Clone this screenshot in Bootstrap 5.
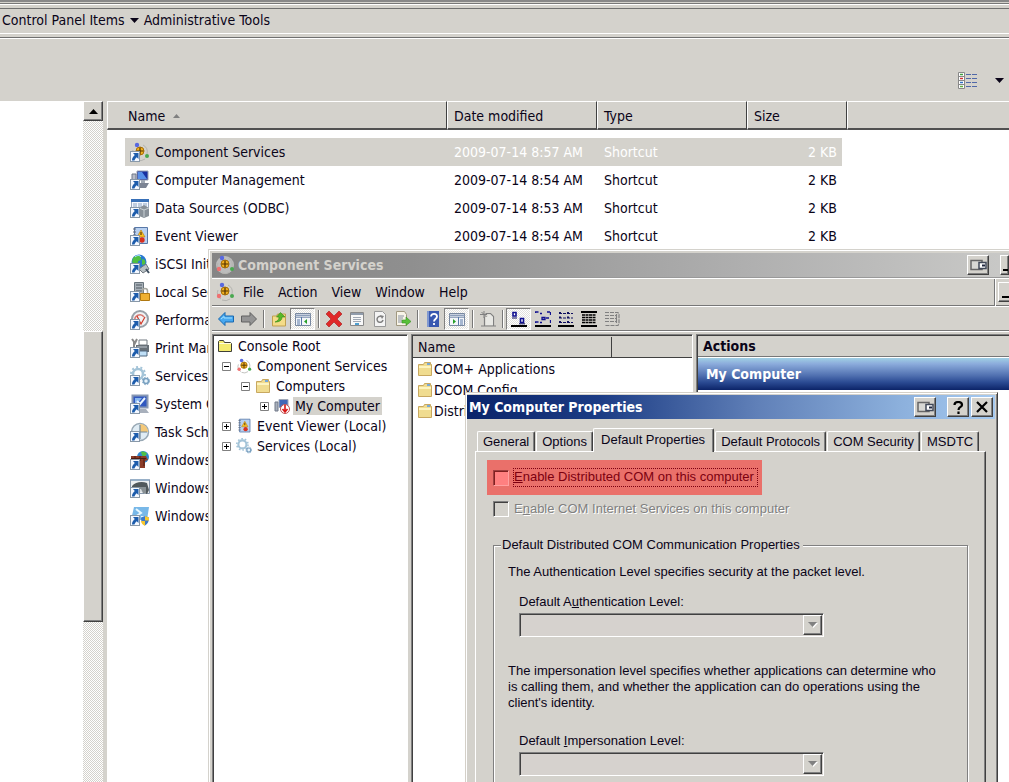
<!DOCTYPE html>
<html lang="en">
<head>
<meta charset="utf-8">
<meta name="viewport" content="width=device-width, initial-scale=1">
<title>Administrative Tools</title>
<link rel="stylesheet" href="https://cdn.jsdelivr.net/npm/bootstrap@5.3.0/dist/css/bootstrap.min.css">
<script src="https://cdn.jsdelivr.net/npm/bootstrap@5.3.0/dist/js/bootstrap.bundle.min.js"></script>
<style>
:root{--face:#d4d2cc;--shade:#808080;--edge:#404040}
body{font-family:"DejaVu Sans Condensed","DejaVu Sans",sans-serif;font-size:14px;line-height:20px;color:#0a0418;background:#fff;overflow:hidden}
button{font:inherit;color:inherit;padding:0;border:0;background:none}
svg{display:block;flex:none}
a{color:inherit;text-decoration:none}
.face{background:var(--face)}
.explorer{min-height:100vh}
.strip-top{height:9px;background:linear-gradient(#888 0 2px,var(--face) 2px 3px,#777 3px 4px,#fff 4px 5px,var(--face) 5px 8px,#707070 8px)}
.crumbs{height:25px;border-bottom:1px solid #fff;padding:0 0 2px 2px;gap:5px}
.crumb-rule{height:5px;background:linear-gradient(var(--face) 0 3px,#707070 3px 4px,#fff 4px)}
.command-bar{height:62px;padding:20px 5px 0 0;gap:17px}
.nav-pane{width:83px}
.scroll-track{width:20px;background:repeating-conic-gradient(#fff 0 25%,var(--face) 0 50%) 0 0/2px 2px}
.raised{background:var(--face);border:1px solid;border-color:#fff #404040 #404040 #fff;box-shadow:inset -1px -1px #808080}
.scroll-up{height:20px}
.scroll-thumb{height:291px;margin-top:210px}
.splitter{width:4px}
.files{table-layout:fixed;width:100%;border-collapse:separate;border-spacing:0}
.files th{height:29px;padding:2px 0 0 6px;font-weight:400;background:var(--face);border-top:1px solid #fff;border-right:1px solid var(--edge);border-left:1px solid #fff;border-bottom:2px solid #505050}
.files th:first-child{padding-left:20px}
.files th:last-child{border-right:0}
.files tbody::before{content:"";display:block;height:8px}
.files td{padding:0;white-space:nowrap}
.cell{height:28px;padding-left:7px;display:flex;align-items:center}
.cell-name{margin-left:18px;padding-left:5px;gap:5px}
.cell-size{margin-right:5px;padding-right:5px;justify-content:flex-end}
.picked .cell{background:var(--face);color:#fff}
.picked .cell-name a{color:#0a0418}
.win{background:var(--face);position:absolute;bottom:0;overflow:hidden}
.console{left:208px;top:249px;right:0;padding:4px 0 0 4px;box-shadow:inset 1px 1px var(--face),inset 2px 2px #fff}
.title{height:24px;font-weight:700;white-space:nowrap}
.console .title{color:var(--face);background:linear-gradient(90deg,#858585,#8f8f8f 25%,#b0b0b0 68%,#c9c9c7);padding:0 0 0 3px;gap:3px}
.bold{font-weight:700}
.tbtn{width:22px;height:20px;display:grid;place-items:center;font-weight:700}
.tbtn.cut{width:9px;overflow:hidden}
.menu-row{height:28px;border-top:1px solid #fff;border-bottom:1px solid #777;margin-top:1px;padding-left:3px;box-shadow:0 -1px #999}
.menu-row .item{margin-right:14px}
.mdi{height:27px;border-left:1px solid #777;width:15px;box-shadow:inset 1px 0 #fff;padding:3px 0 0 3px}
.tools{height:25px;border-top:1px solid #fff;border-bottom:1px solid #777;padding-left:2px;box-shadow:0 1px #fff}
.tool{width:23px;height:22px;display:grid;place-items:center}
.tool.on{width:25px;border:1px solid;border-color:#808080 #fff #fff #808080;background:repeating-conic-gradient(#fff 0 25%,#e2e1dd 0 50%) 0 0/2px 2px}
.sep{width:1px;height:18px;margin:0 3px;background:#777;box-shadow:1px 0 #fff}
.panes{margin:3px -3px -3px 0;gap:3px}
.sunken{border:1px solid;border-color:#808080 #fff #fff #808080;box-shadow:inset 1px 1px #404040;background:#fff;padding:1px 0 0 1px}
.tree-pane{width:196px}
.tree-row{height:20px;gap:5px;padding-left:3px}
.lv1{padding-left:8px}.lv2{padding-left:27px}.lv3{padding-left:46px}
.tree-pane .sel{background:var(--face);padding:0 2px;margin-left:-2px;line-height:18px}
.list-pane{width:282px}
.list-head{height:22px;background:var(--face);border-bottom:1px solid #404040}
.list-head .first-col{width:199px;padding-left:5px;border-right:1px solid #404040}
.list-row{height:21px;gap:1px;padding-left:4px}
.act-head{height:21px;padding-left:5px;border-bottom:1px solid #777}
.act-sel{height:32px;margin-top:1px;padding-left:8px;color:#fff;background:linear-gradient(#a0d0e4,#8cacdc 18%,#5070b0 55%,#2c4c94 75%,#0c2468)}
.dialog{left:465px;top:392px;right:11px;border:1px solid;border-color:#d4d0c8 #404040 #404040 #d4d0c8;border-bottom:0;box-shadow:inset 1px 1px #fff,inset -1px 0 #808080;padding:2px 2px 0 1px;font-family:"Liberation Sans",Arial,sans-serif;font-size:13px;line-height:16px}
.dialog .title{font-family:"DejaVu Sans Condensed","DejaVu Sans",sans-serif;color:#fff;background:linear-gradient(90deg,#0a246a,#1c3c84 25%,#6080b8 55%,#8cb0dc 82%,#a6caf0);padding:0 2px;font-size:14px;gap:2px}
.dock-btn{margin-right:9px}
.tabs{padding:9px 0 0 10px;height:32px;align-items:flex-end}
.tab{height:20px;border:1px solid;border-color:#fff #404040 transparent #fff;border-bottom:0;border-radius:2px 2px 0 0;box-shadow:inset -1px 0 #808080;white-space:nowrap;padding:1px 5px 0;margin-right:1px}
.tab.current{height:24px;margin-bottom:-1px;background:var(--face);padding:1px 8px 3px 7px;margin-left:-1px;z-index:1}
.sheet{margin:0 9px 0 8px;border:1px solid;border-color:#fff #404040 #404040 #fff;box-shadow:inset -1px 0 #808080;padding:8px 17px 0 11px;height:400px}
.flag{background:#ea706a;color:#7c0010;width:275px;height:35px;padding-left:6px}
.flag.off{background:none;color:#808080;text-shadow:1px 1px #fff;height:28px}
.flag label{padding:1px 1px 2px}
.flag:not(.off) label{padding-right:4px;outline:1px dotted #7c0010;outline-offset:-1px}
.tick{appearance:none;width:16px;height:16px;margin:0 4px 0 0;flex:none;border:1px solid;border-color:#808080 #fff #fff #808080;box-shadow:inset 1px 1px #404040}
.flag:not(.off) .tick{background:#ff8080;border-color:#a04040 #ffa0a0 #ffa0a0 #a04040;box-shadow:inset 1px 1px #802020}
.group{margin:14px 0 0 6px;border:1px solid #808080;box-shadow:inset 1px 1px #fff,1px 1px #fff;padding:0 14px;height:330px}
.group legend{float:none;width:auto;font-size:13px;line-height:16px;margin:-9px 0 0 -7px;padding:0 3px 0 1px;background:var(--face)}
.group p{margin:11px 0 14px}
.group .intro2{margin:26px 0 22px}
.group .field label{display:block;margin-bottom:3px}
.combo{width:305px;height:24px;position:relative}
.combo select{appearance:none;width:100%;height:100%;background:#d6d2ce;border:1px solid;border-color:#808080 #fff #fff #808080;box-shadow:inset 1px 1px #404040;border-radius:0}
.combo .raised{position:absolute;right:2px;top:2px;width:19px;height:20px;display:grid;place-items:center;pointer-events:none}
.field{padding-left:11px}
</style>
</head>
<body>
<svg width="0" height="0" class="position-absolute" aria-hidden="true">
<defs>
<symbol id="link" viewBox="0 0 20 20"><rect x=".5" y="9.500" width="9" height="10" fill="#f4f8ff" stroke="#8898a8"/><path d="M3 11h5.500v6L6.700 15.200C5.500 16 5 17 4.500 18.500H2c0-2.500 1-4 2.800-5.500z" fill="#1c5cac"/></symbol>
<symbol id="com" viewBox="0 0 20 20"><path d="M3 8a7 7 0 0 0 3 9M13 3a8 8 0 0 1 4 9M7 18a8 8 0 0 0 8-1" fill="none" stroke="#b4b4b0"/><circle cx="10" cy="9" r="4" fill="#f0b020" stroke="#a87008"/><path d="M10 5.500v7M6.500 9h7" stroke="#503000" stroke-width="1.200"/><circle cx="7" cy="3" r="2.200" fill="#5868e0"/><circle cx="17" cy="14" r="2" fill="#48a850"/><circle cx="4" cy="14" r="2.200" fill="#f07070"/></symbol>
<symbol id="comp" viewBox="0 0 20 20"><path d="M7 1h11v9H7z" fill="#1830a0" stroke="#98a0b0"/><path d="M8 2h4l5 7H8z" fill="#5890e8"/><path d="M2 4h4v7H2z" fill="#b8bcc8" stroke="#707888"/><path d="M8 13h11l-3 5H8z" fill="#7c8494"/><path d="M11 10h4v3h-4z" fill="#a0a8b4"/></symbol>
<symbol id="odbc" viewBox="0 0 20 20"><path d="M1.500 1.500h17v13h-17z" fill="#f4f8ff" stroke="#98a8c0"/><path d="M1 1h18v3H1z" fill="#3870b8"/><path d="M3 6h4M8 6h4M13 6h4M3 8h4M8 8h4M13 8h4" stroke="#88a0c0"/><path d="M9 10l5-3 5 3v8l-5 2-5-2z" fill="#889098"/><path d="M9 10l5 2 5-2M14 12v7" stroke="#c8d0d4" fill="none"/></symbol>
<symbol id="event" viewBox="0 0 20 20"><path d="M4.500 1.500h13v16h-13z" fill="#b8d0f0" stroke="#5878a8"/><path d="M3 3h3M3 6h3M3 9h3M3 12h3M3 15h3" stroke="#606878"/><path d="M11 4l4 7H7z" fill="#f8c020" stroke="#b87808" stroke-width=".600"/><path d="M11 6v3" stroke="#402000"/><circle cx="12" cy="14" r="2.700" fill="#d83020"/></symbol>
<symbol id="globe" viewBox="0 0 20 20"><circle cx="9" cy="8" r="7.500" fill="#2878d0"/><path d="M3 4c3-3 7-3 8 0s-3 2-3 4-4 2-6 0zM12 5c3 0 4 3 3 5l-3 1z" fill="#50c040"/><path d="M5 3c2-2 5-2 6 0" stroke="#c8f0ff" fill="none"/><path d="M9 15l7-5 3 5-6 4z" fill="#b8c0c4" stroke="#707880"/><path d="M16 15l3 4" stroke="#405060" stroke-width="2"/></symbol>
<symbol id="lock" viewBox="0 0 20 20"><path d="M4.500.5h9v14h-9z" fill="#a8b0b8" stroke="#68747c"/><path d="M6 3h6M6 6h6M6 9h6" stroke="#4c5860"/><path d="M12.500 12V9a2.500 2.500 0 0 1 5 0v3" fill="none" stroke="#a8a8a0" stroke-width="1.500"/><path d="M10.500 11.500h9v7h-9z" fill="#f0b030" stroke="#b07810"/></symbol>
<symbol id="gauge" viewBox="0 0 20 20"><circle cx="10" cy="9" r="8" fill="#f0f2f4" stroke="#98a0a8" stroke-width="2"/><path d="M5 11a5 5 0 0 1 9-4" fill="none" stroke="#d87870" stroke-width="1.500"/><path d="M7 6l4 8 4-7" fill="none" stroke="#d03828" stroke-width="1.200"/></symbol>
<symbol id="print" viewBox="0 0 20 20"><path d="M2 1l3 4 2-4M4 4v7" stroke="#888" fill="none" stroke-width="2"/><path d="M9 2h8v5H9z" fill="#fff" stroke="#707880"/><path d="M6 7h13v7H6z" fill="#687078"/><path d="M9 13h8v5H9z" fill="#c0e0f8" stroke="#506880"/><path d="M7 9h10" stroke="#c0c8d0"/></symbol>
<symbol id="gear" viewBox="0 0 20 20"><circle cx="8" cy="8" r="5" fill="#fff" stroke="#a4c4d8" stroke-width="2.600"/><circle cx="8" cy="8" r="7" fill="none" stroke="#a4c4d8" stroke-width="2" stroke-dasharray="2 2.400"/><circle cx="16" cy="15" r="2.500" fill="#e8f4fc" stroke="#78a0c0" stroke-width="1.500"/><circle cx="16" cy="15" r="3.700" fill="none" stroke="#78a0c0" stroke-dasharray="1.500 1.500"/></symbol>
<symbol id="sys" viewBox="0 0 20 20"><path d="M2.500 1.500h15v12h-15z" fill="#3058c0" stroke="#8898b4" stroke-width="2"/><path d="M5 4h7l-6 7H5z" fill="#88b8f0"/><path d="M7 7l3 3 5-6" stroke="#e8f4ff" stroke-width="2" fill="none"/><path d="M8 15h8l3 4H8z" fill="#a8b0bc"/></symbol>
<symbol id="clock" viewBox="0 0 20 20"><circle cx="10" cy="10" r="8.500" fill="#e0ecf4" stroke="#98a8b4" stroke-width="1.500"/><path d="M10 2a8 8 0 0 1 8 8h-8z" fill="#f4c878"/><path d="M10 3v14M10 10h7" stroke="#708898" stroke-width="1.200"/></symbol>
<symbol id="wall" viewBox="0 0 20 20"><circle cx="13" cy="7" r="6" fill="#3088d0"/><path d="M11 2c3-1 5 0 6 2l-4 4z" fill="#50c048"/><path d="M1 6h15l2 4-3 1v7h-5v-6H1z" fill="#8c3c28"/><path d="M1 8.500h15M5 6v5M10 6v5M14 8v8" stroke="#4c1c14"/></symbol>
<symbol id="mem" viewBox="0 0 20 20"><path d="M.5 1.500h19v14H.5z" fill="#eceff2" stroke="#8898ac"/><path d="M1 1h18v2H1z" fill="#98b0c8"/><path d="M2 8c3-4 10-5 15-3l2 7-2 4-4-1-2-4-9 1z" fill="#50585c"/><path d="M11 9v5M13 9v6M15 9v7" stroke="#c0c8cc"/></symbol>
<symbol id="shell" viewBox="0 0 20 20"><path d="M4 1h15l-2 13H1z" fill="#78b8e8"/><path d="M6 3l5 4-6 4M11 11h4" fill="none" stroke="#e8f8ff" stroke-width="2"/><path d="M15 10l4 1.500c0 4-1 6-4 8-3-2-4-4-4-8z" fill="#3c78c8"/><path d="M15 10l4 1.500v3h-4zM15 15h-4c0 2 2 4 4 5z" fill="#f8c830"/></symbol>
<symbol id="folder" viewBox="0 0 16 16"><path d="M1.500 14.500v-11h5l1-2h6v2h1v11z" fill="#f0dc90" stroke="#c8a860"/><path d="M2 6h12" stroke="#fdf4c0" stroke-width="2"/><path d="M10 2h3v2h-3z" fill="#78a8d8"/></symbol>
<symbol id="froot" viewBox="0 0 16 16"><path d="M1.500 13.500v-10l1-1h4l1 2h6l1 1v8z" fill="#f4ec70" stroke="#404038"/><path d="M2 5.500h12" stroke="#fffce0"/></symbol>
<symbol id="mycomp" viewBox="0 0 16 16"><path d="M1 4h3v9H1z" fill="#a8b0bc" stroke="#707888"/><path d="M5 1.500h9v8H5z" fill="#4068b8" stroke="#a0a8b8"/><circle cx="11" cy="11" r="4.500" fill="#fff" stroke="#c05050"/><path d="M11 7v6M8.500 11l2.500 3 2.500-3" stroke="#d81818" stroke-width="1.600" fill="none"/></symbol>
<symbol id="plus" viewBox="0 0 9 9"><path d="M.5.5h8v8h-8z" fill="#fff" stroke="#808080"/><path d="M2 4.500h5M4.500 2v5" stroke="#000"/></symbol>
<symbol id="minus" viewBox="0 0 9 9"><path d="M.5.5h8v8h-8z" fill="#fff" stroke="#808080"/><path d="M2 4.500h5" stroke="#000"/></symbol>
<symbol id="left" viewBox="0 0 16 16"><path d="M.5 8L7 1.500v3.500h8.500v6H7v3.500z" fill="#48a8f0" stroke="#1868b0"/><path d="M3 8l3-2.500V7h8" fill="none" stroke="#a0e0ff"/></symbol>
<symbol id="right" viewBox="0 0 16 16"><path d="M15.500 8L9 1.500v3.500H.5v6H9v3.500z" fill="#949494" stroke="#606060"/></symbol>
<symbol id="up" viewBox="0 0 16 16"><path d="M1.500 15V5h4l1-2h8v12z" fill="#f4dc88" stroke="#c0a050"/><path d="M4 11c3-1 4-3 4-5H5.500l4-4.500L14 6h-3c0 3-2 5-7 5z" fill="#58b828" stroke="#308818" stroke-width=".600"/></symbol>
<symbol id="pane" viewBox="0 0 16 16"><path d="M.5 2.500h15v12H.5z" fill="#f4f6fa" stroke="#7888a0"/><path d="M1 4h14v1H1zM1 6.500h14" stroke="#98a8c0" fill="#6880a8"/><path d="M6.500 6v8M2 9h3M2 11h3M2 13h3" stroke="#5878a8"/><path d="M12 8v5l-3-2.500z" fill="#28a028"/></symbol>
<symbol id="del" viewBox="0 0 16 16"><path d="M0 3l3-3 5 5 5-5 3 3-5 5 5 5-3 3-5-5-5 5-3-3 5-5z" fill="#e02828" stroke="#a81818" stroke-width=".600"/></symbol>
<symbol id="prop" viewBox="0 0 16 16"><path d="M1.500 1.500h13v13h-13z" fill="#f8f8f8" stroke="#888"/><path d="M2 3h12" stroke="#909cac" stroke-width="2"/><path d="M4 6.500h8M4 8.500h8M4 10.500h8" stroke="#a0a8b4"/><path d="M6 13h4" stroke="#50a0d0" stroke-width="2"/></symbol>
<symbol id="ref" viewBox="0 0 16 16"><path d="M2.500.5h8l3 3v12h-11z" fill="#f4f4f4" stroke="#989898"/><path d="M11 9a3 3 0 1 1-2-3.500" fill="none" stroke="#808080" stroke-width="1.500"/><path d="M8 4l4 1-2 3z" fill="#808080"/></symbol>
<symbol id="exp" viewBox="0 0 16 16"><path d="M1.500.5h8l2 3v11h-10z" fill="#f8f4e8" stroke="#a09880"/><path d="M3 5h6M3 7h5M3 9h4M3 11h4" stroke="#8890a0"/><path d="M7 9h4V6l5 4.500-5 4V12H7z" fill="#58c038" stroke="#389020" stroke-width=".600"/></symbol>
<symbol id="help" viewBox="0 0 16 16"><path d="M2 0h12v16H2z" fill="#3858b0"/><path d="M2 0h2v16H2z" fill="#8098d0"/><path d="M6 5.500C6 2 12 2 12 5.500 12 8 9 8 9 10.500M9 12v2" fill="none" stroke="#fff" stroke-width="1.800"/></symbol>
<symbol id="newp" viewBox="0 0 16 16"><path d="M4.500 14.500v-9M4.500 4l2-1.500h4l3 3v9M1 15h15" fill="none" stroke="#808080" stroke-width="1.200"/><path d="M5.500 14V6h2V3.500h3L13 6v8z" fill="#e8e8e4"/><path d="M4 0v7M0 3.500h7M1.500 1l5 5" stroke="#808080"/></symbol>
<symbol id="v1" viewBox="0 0 16 16"><path d="M0 14h16v2H0z" fill="#000"/><path d="M2 1.500h3v3.500H2zM9.500 7.500h3v4h-3z" fill="#fff" stroke="#101090" stroke-width="1.600"/><path d="M1 7h5M8 12.800h6" stroke="#101060"/></symbol>
<symbol id="v2" viewBox="0 0 16 16"><path d="M0 14h16v2H0z" fill="#000"/><path d="M.5 2v-1h3M5 2.500h2M.5 12v-1h3M5 11.500h2M7 6.500h3v2H7zM11 7h3M15.500 1v3M15.500 9v3M12 1h3" fill="none" stroke="#101090" stroke-width="1.300"/></symbol>
<symbol id="v3" viewBox="0 0 16 16"><path d="M0 14h16v2H0z" fill="#000"/><path d="M1 2.500h14M1 7h14M1 11.500h14M1 1.500h2M9 1.500h2M1 6h2M9 6h2M1 10.500h2M9 10.500h2" fill="none" stroke="#101060" stroke-width="1.200" stroke-dasharray="3 1"/></symbol>
<symbol id="v4" viewBox="0 0 16 16"><path d="M0 14h16v2H0zM0 0h16v2H0z" fill="#000"/><path d="M1 4h14M1 6.500h14M1 9h14M1 11.500h14" stroke="#000" stroke-width="1.400" stroke-dasharray="3 .500"/></symbol>
<symbol id="v5" viewBox="0 0 16 16"><path d="M1 1.500h13l1 2v9l-1 2H1M1 4.500h12M1 7.500h12M1 10.500h12M12.500 3v10" fill="none" stroke="#808080" stroke-width="1.200" stroke-dasharray="4 1"/></symbol>
<symbol id="dock" viewBox="0 0 17 14"><path d="M1 2.500h11v9H1z" fill="#d8d8d4" stroke="#666" stroke-width="1.500"/><path d="M9 4.500h7v6H9z" fill="#fff" stroke="#404858" stroke-width="1.500"/><path d="M12 6.500h3v2h-3z" fill="#202840"/></symbol>
<symbol id="down" viewBox="0 0 9 5"><path d="M0 0h9L4.500 5z" fill="currentColor"/></symbol>
</defs>
</svg>

<main class="explorer d-flex flex-column">
  <div class="strip-top"></div>
  <nav class="crumbs face d-flex align-items-center" aria-label="Address">
    <a href="#">Control Panel Items</a>
    <button aria-label="More locations"><svg width="9" height="5"><use href="#down"/></svg></button>
    <a href="#">Administrative Tools</a>
  </nav>
  <div class="crumb-rule"></div>
  <div class="command-bar face d-flex justify-content-end align-items-center flex-shrink-0">
    <button aria-label="Change view"><svg width="20" height="17" viewBox="0 0 20 17"><path d="M.5.5h6v16h-6z" fill="#fff" stroke="#888"/><path d="M0 4.500h7M0 8.500h7M0 12.500h7" stroke="#888"/><path d="M2 2.500h3" stroke="#40a040" stroke-width="1.500"/><path d="M2 6.500h3" stroke="#d03030" stroke-width="1.500"/><path d="M2 10.500h3" stroke="#3070c0" stroke-width="1.500"/><path d="M2 14.500h3" stroke="#60b040" stroke-width="1.500"/><path d="M8 2.500h12M8 6.500h12M8 10.500h12M8 14.500h12" stroke="#5068a8" stroke-dasharray="5 1"/></svg></button>
    <button aria-label="View options"><svg width="9" height="5"><use href="#down"/></svg></button>
  </div>
  <div class="d-flex flex-grow-1">
    <div class="nav-pane flex-shrink-0"></div>
    <div class="scroll-track flex-shrink-0 d-flex flex-column">
      <button class="raised scroll-up d-grid justify-content-center align-content-center" aria-label="Scroll up"><svg width="9" height="5"><path d="M0 5h9L4.500 0z"/></svg></button>
      <div class="raised scroll-thumb"></div>
    </div>
    <div class="splitter face flex-shrink-0"></div>
    <div class="flex-grow-1">
      <table class="files">
        <colgroup><col style="width:340px"><col style="width:150px"><col style="width:150px"><col style="width:100px"><col></colgroup>
        <thead><tr><th><span class="d-flex align-items-center gap-2">Name <svg width="7" height="4"><path d="M0 4h7L3.500 0z" fill="#808080"/></svg></span></th><th>Date modified</th><th>Type</th><th>Size</th><th></th></tr></thead>
        <tbody id="files"></tbody>
      </table>
    </div>
  </div>
</main>

<section class="win console d-flex flex-column" aria-label="Component Services">
  <div class="title d-flex align-items-center flex-shrink-0">
    <svg width="20" height="20"><circle cx="10" cy="10" r="9" fill="#bcbcbc"/><use href="#com"/></svg><span class="flex-grow-1">Component Services</span>
    <button class="raised tbtn me-2" aria-label="Dock"><svg width="17" height="14"><use href="#dock"/></svg></button>
    <button class="raised tbtn cut" aria-label="Minimize"><svg width="7" height="14"><path d="M2 11h5v2H2z"/></svg></button>
  </div>
  <div class="menu-row d-flex align-items-center flex-shrink-0">
    <svg width="20" height="20" class="me-1"><use href="#com"/></svg>
    <button class="item ms-1">File</button><button class="item">Action</button><button class="item">View</button><button class="item">Window</button><button class="item">Help</button>
    <div class="mdi ms-auto"><button class="raised tbtn" aria-label="Minimize child"><svg width="14" height="14"><path d="M0 11h9v2H0z"/></svg></button></div>
  </div>
  <div class="tools d-flex align-items-center flex-shrink-0">
    <button class="tool" aria-label="Back"><svg width="16" height="16"><use href="#left"/></svg></button>
    <button class="tool" aria-label="Forward"><svg width="16" height="16"><use href="#right"/></svg></button>
    <span class="sep"></span>
    <button class="tool" aria-label="Up"><svg width="16" height="16"><use href="#up"/></svg></button>
    <button class="tool on" aria-label="Tree"><svg width="16" height="16"><use href="#pane"/></svg></button>
    <span class="sep"></span>
    <button class="tool" aria-label="Delete"><svg width="16" height="16"><use href="#del"/></svg></button>
    <button class="tool" aria-label="Properties"><svg width="16" height="16"><use href="#prop"/></svg></button>
    <button class="tool" aria-label="Refresh"><svg width="16" height="16"><use href="#ref"/></svg></button>
    <button class="tool" aria-label="Export"><svg width="16" height="16"><use href="#exp"/></svg></button>
    <span class="sep"></span>
    <button class="tool" aria-label="Help"><svg width="16" height="16"><use href="#help"/></svg></button>
    <button class="tool on" aria-label="Action pane"><svg width="16" height="16" viewBox="0 0 16 16"><path d="M.5 2.500h15v12H.5z" fill="#f4f6fa" stroke="#7888a0"/><path d="M1 4h14v1H1zM1 6.500h14" stroke="#98a8c0" fill="#6880a8"/><path d="M9.500 6v8M11 9h3M11 11h3M11 13h3" stroke="#5878a8"/><path d="M4 8v5l3-2.500z" fill="#28a028"/></svg></button>
    <span class="sep"></span>
    <button class="tool" aria-label="New"><svg width="16" height="16"><use href="#newp"/></svg></button>
    <span class="sep"></span>
    <button class="tool on" aria-label="Large icons"><svg width="16" height="16"><use href="#v1"/></svg></button>
    <button class="tool" aria-label="Small icons"><svg width="16" height="16"><use href="#v2"/></svg></button>
    <button class="tool" aria-label="List"><svg width="16" height="16"><use href="#v3"/></svg></button>
    <button class="tool" aria-label="Detail"><svg width="16" height="16"><use href="#v4"/></svg></button>
    <button class="tool" aria-label="Status"><svg width="16" height="16"><use href="#v5"/></svg></button>
  </div>
  <div class="panes d-flex flex-grow-1">
    <div class="sunken tree-pane flex-shrink-0">
      <div class="tree-row d-flex align-items-center"><svg width="16" height="16"><use href="#froot"/></svg><a href="#">Console Root</a></div>
      <div class="tree-row lv1 d-flex align-items-center"><svg width="9" height="9"><use href="#minus"/></svg><svg width="16" height="16"><use href="#com"/></svg><a href="#">Component Services</a></div>
      <div class="tree-row lv2 d-flex align-items-center"><svg width="9" height="9"><use href="#minus"/></svg><svg width="16" height="16"><use href="#folder"/></svg><a href="#">Computers</a></div>
      <div class="tree-row lv3 d-flex align-items-center"><svg width="9" height="9"><use href="#plus"/></svg><svg width="16" height="16"><use href="#mycomp"/></svg><a href="#" class="sel">My Computer</a></div>
      <div class="tree-row lv1 d-flex align-items-center"><svg width="9" height="9"><use href="#plus"/></svg><svg width="16" height="16"><use href="#event"/></svg><a href="#">Event Viewer (Local)</a></div>
      <div class="tree-row lv1 d-flex align-items-center"><svg width="9" height="9"><use href="#plus"/></svg><svg width="16" height="16"><use href="#gear"/></svg><a href="#">Services (Local)</a></div>
    </div>
    <div class="sunken list-pane flex-shrink-0">
      <div class="list-head d-flex align-items-center"><div class="first-col">Name</div></div>
      <div class="list-row d-flex align-items-center"><svg width="16" height="16"><use href="#folder"/></svg><a href="#">COM+ Applications</a></div>
      <div class="list-row d-flex align-items-center"><svg width="16" height="16"><use href="#folder"/></svg><a href="#">DCOM Config</a></div>
      <div class="list-row d-flex align-items-center"><svg width="16" height="16"><use href="#folder"/></svg><a href="#">Distri</a></div>
    </div>
    <div class="sunken flex-grow-1">
      <div class="act-head face bold d-flex align-items-center">Actions</div>
      <div class="act-sel bold d-flex align-items-center">My Computer</div>
    </div>
  </div>
</section>

<section class="win dialog" role="dialog" aria-label="My Computer Properties">
  <div class="title d-flex align-items-center">
    <span class="flex-grow-1">My Computer Properties</span>
    <button class="raised tbtn dock-btn" aria-label="Dock"><svg width="17" height="14"><use href="#dock"/></svg></button>
    <button class="raised tbtn" aria-label="Help"><svg width="11" height="13" viewBox="0 0 11 13"><path d="M1.500 4C1.500 0 9 0 9 4c0 2-3.500 2-3.500 5M5.500 10.500V13" fill="none" stroke="#000" stroke-width="2.200"/></svg></button>
    <button class="raised tbtn" aria-label="Close"><svg width="12" height="12"><path d="M1 1l10 10M11 1L1 11" stroke="#000" stroke-width="2.200"/></svg></button>
  </div>
  <div class="tabs d-flex" role="tablist">
    <button class="tab" role="tab">General</button><button class="tab" role="tab">Options</button><button class="tab current" role="tab">Default Properties</button><button class="tab" role="tab">Default Protocols</button><button class="tab" role="tab">COM Security</button><button class="tab" role="tab">MSDTC</button>
  </div>
  <div class="sheet">
    <div class="flag d-flex align-items-center"><input class="tick" type="checkbox" id="dcom"><label for="dcom"><u>E</u>nable Distributed COM on this computer</label></div>
    <div class="flag off d-flex align-items-center text-nowrap"><input class="tick" type="checkbox" id="cis" disabled><label for="cis">E<u>n</u>able COM Internet Services on this computer</label></div>
    <fieldset class="group">
      <legend>Default Distributed COM Communication Properties</legend>
      <p>The Authentication Level specifies security at the packet level.</p>
      <div class="field">
        <label for="auth">Default A<u>u</u>thentication Level:</label>
        <div class="combo"><select id="auth" disabled></select><span class="raised"><svg width="10" height="6"><path d="M1 1h9L5.500 6z" fill="#fff"/><path d="M0 0h9L4.500 5z" fill="#808080"/></svg></span></div>
      </div>
      <p class="intro2">The impersonation level specifies whether applications can determine who<br>is calling them, and whether the application can do operations using the<br>client's identity.</p>
      <div class="field">
        <label for="imp">Default <u>I</u>mpersonation Level:</label>
        <div class="combo"><select id="imp" disabled></select><span class="raised"><svg width="10" height="6"><path d="M1 1h9L5.500 6z" fill="#fff"/><path d="M0 0h9L4.500 5z" fill="#808080"/></svg></span></div>
      </div>
    </fieldset>
  </div>
</section>
<script>
const rows=[["com","Component Services","8:57"],["comp","Computer Management","8:54"],["odbc","Data Sources (ODBC)","8:53"],["event","Event Viewer","8:54"],["globe","iSCSI Init"],["lock","Local Sec"],["gauge","Performa"],["print","Print Mar"],["gear","Services"],["sys","System C"],["clock","Task Sch"],["wall","Windows"],["mem","Windows"],["shell","Windows"]];
document.getElementById("files").innerHTML=rows.map(([icon,name,time],i)=>`<tr class="${i?"":"picked"}"><td><div class="cell cell-name"><svg width="20" height="20"><use href="#${icon}"/><use href="#link"/></svg><a href="#">${name}</a></div></td>${time?`<td><div class="cell">2009-07-14 ${time} AM</div></td><td><div class="cell">Shortcut</div></td><td><div class="cell cell-size">2 KB</div></td><td></td>`:`<td colspan="4"></td>`}</tr>`).join("");
</script>
</body>
</html>
